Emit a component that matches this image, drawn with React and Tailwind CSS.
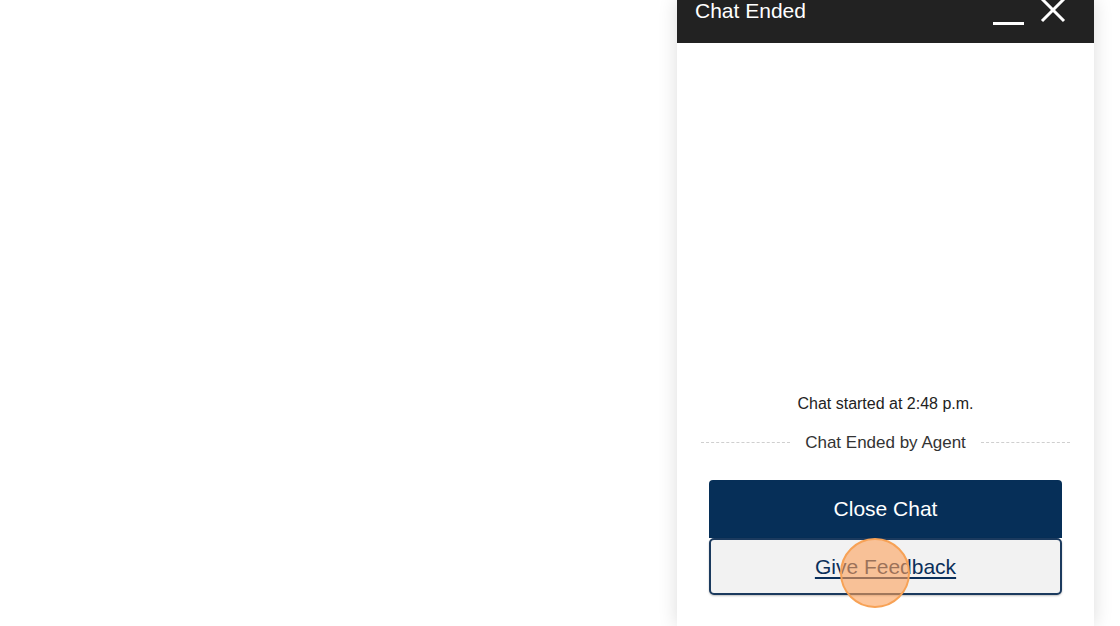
import React from 'react';

function App() {
  return (
    <div className="w-[1120px] h-[626px] bg-white overflow-hidden flex justify-end pr-[26px]" style={{ fontFamily: '"Liberation Sans", Arial, sans-serif' }}>
      <div className="relative w-[417px] h-full bg-white flex flex-col shadow-[0_0_18px_rgba(0,0,0,0.14)]">
        {/* Header */}
        <div className="h-[43px] bg-[#222222] flex items-start justify-between pl-[18px] pr-[28px]">
          <span className="text-white text-[21px] leading-none mt-0">Chat Ended</span>
          <div className="flex items-start gap-[16px]">
            <div className="w-[31px] h-[3px] bg-white mt-[22px]" />
            <svg width="26" height="24" viewBox="0 0 26 24" className="-mt-[1px]">
              <path d="M2 0 L24 22 M24 0 L2 22" stroke="white" strokeWidth="3" />
            </svg>
          </div>
        </div>

        {/* Body */}
        <div className="flex-1 flex flex-col justify-end pb-[31px]">
          <p className="text-center text-[16px] text-[#222] mb-[14px]">Chat started at 2:48 p.m.</p>
          <div className="flex items-center px-[24px] mb-[25px]">
            <div className="flex-1 border-t border-dashed border-[#cfcfcf]" />
            <span className="px-[15px] text-[17px] text-[#333]">Chat Ended by Agent</span>
            <div className="flex-1 border-t border-dashed border-[#cfcfcf]" />
          </div>
          <div className="px-[32px] flex flex-col">
            <button className="h-[58px] bg-[#062f58] text-white text-[21px] rounded-t-[4px]">Close Chat</button>
            <button className="relative h-[57px] bg-[#f2f2f2] border-[2px] border-[#1b3a5e] rounded-[5px] text-[21px] text-[#0a2f5a] underline underline-offset-[3px] shadow-[0_1px_2px_rgba(0,0,0,0.25)]">
              Give Feedback
              <span className="absolute left-[129px] top-[-2px] w-[70px] h-[70px] rounded-full bg-[rgba(251,160,90,0.6)] border-[2px] border-[#f7a256]" />
            </button>
          </div>
        </div>
      </div>
    </div>
  );
}

export default App;
